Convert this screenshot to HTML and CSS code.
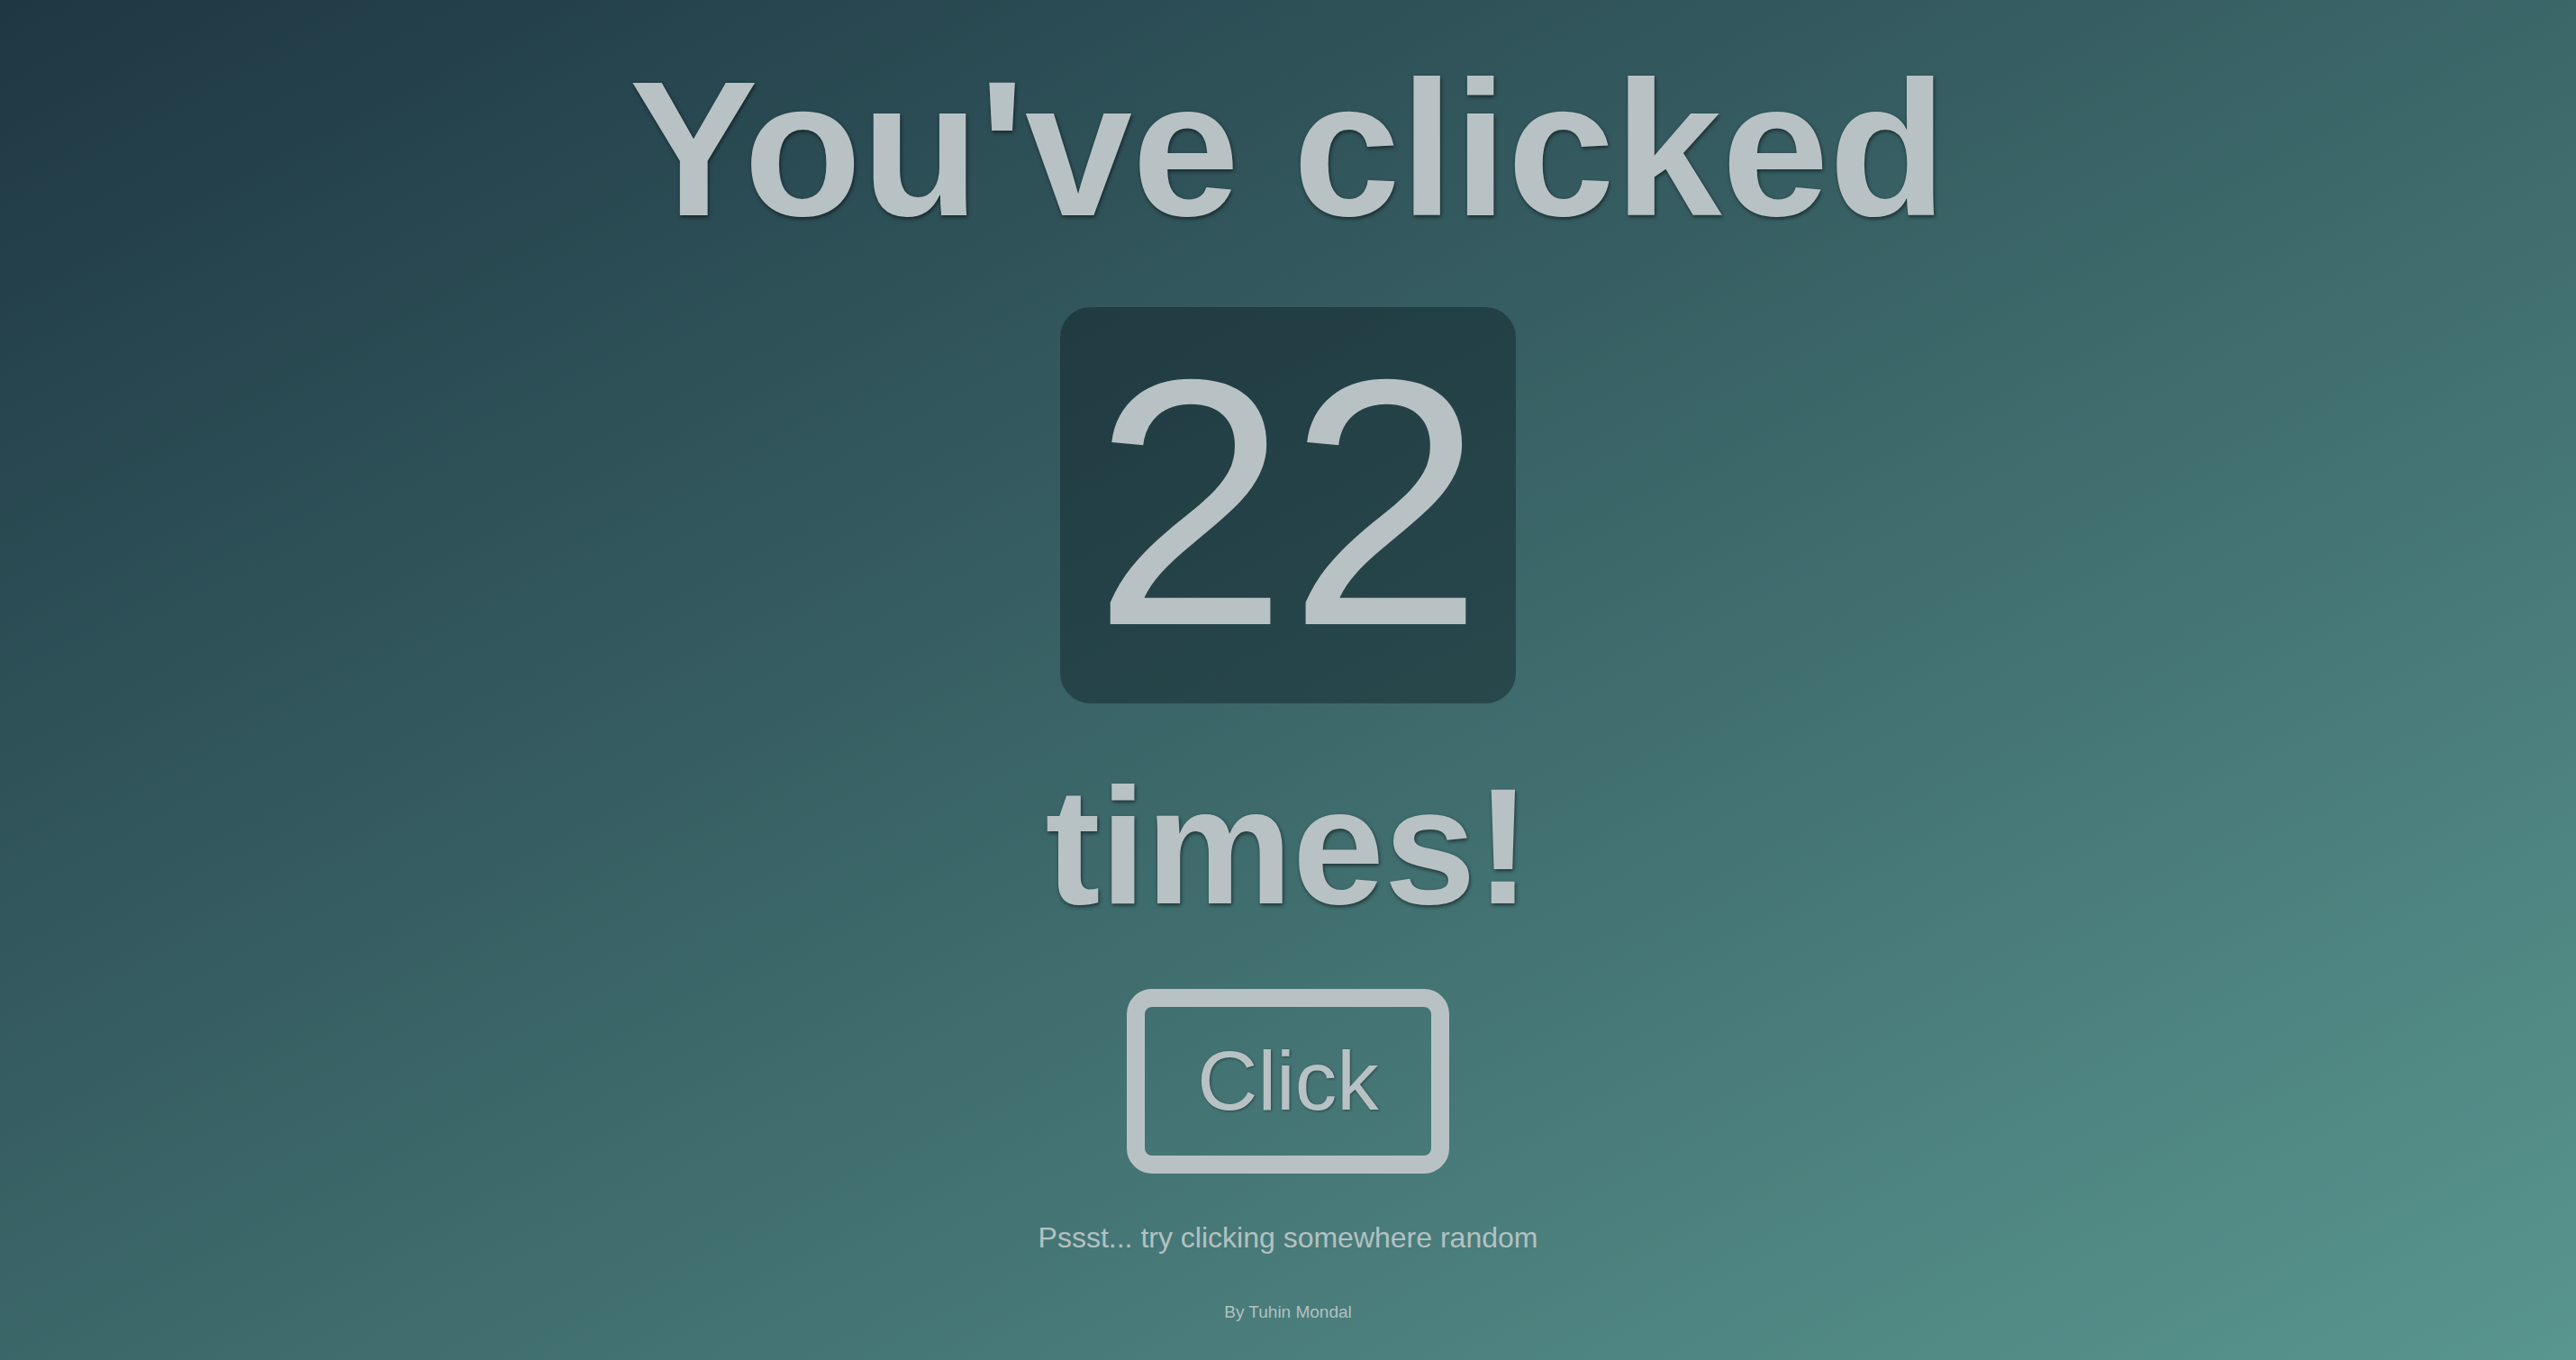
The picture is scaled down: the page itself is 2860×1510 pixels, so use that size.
FILE: index.html
```html
<!DOCTYPE html>
<html lang="en">
<head>
<meta charset="utf-8">
<title>Click counter</title>
<link rel="stylesheet" href="styles.css">
</head>
<body>
<main class="page">
  <h1 class="title">You've clicked</h1>
  <div class="counter">22</div>
  <h2 class="times">times!</h2>
  <button class="click-btn" type="button">Click</button>
  <p class="hint">Pssst... try clicking somewhere random</p>
  <p class="credit">By Tuhin Mondal</p>
</main>
</body>
</html>
```
FILE: styles.css
```css
html, body {
  margin: 0;
  padding: 0;
  height: 100%;
}

body {
  background: linear-gradient(to bottom right, #1e3743, #59968f);
  font-family: "Liberation Sans", Arial, sans-serif;
  color: #b8c2c5;
  overflow: hidden;
}

.page {
  height: 100vh;
  display: flex;
  flex-direction: column;
  align-items: center;
  justify-content: center;
  gap: 53px;
}

.title {
  margin: 0;
  font-size: 214px;
  font-weight: 700;
  line-height: normal;
  text-shadow: 1px 2px 4px rgba(0, 0, 0, 0.55);
}

.counter {
  font-size: 390px;
  line-height: 434px;
  padding: 0 36px 6px;
  border-radius: 34px;
  background: rgba(10, 25, 30, 0.42);
}

.times {
  margin: 0;
  font-size: 183px;
  font-weight: 700;
  line-height: normal;
  text-shadow: 1px 2px 4px rgba(0, 0, 0, 0.55);
}

.click-btn {
  font-family: "Liberation Sans", Arial, sans-serif;
  font-size: 93px;
  line-height: normal;
  color: #b8c2c5;
  background: transparent;
  border: 20px solid #b8c2c5;
  border-radius: 28px;
  padding: 29px 58px;
  text-shadow: 1px 1px 3px rgba(0, 0, 0, 0.4);
  cursor: pointer;
}

.hint {
  margin: 0;
  font-size: 32px;
  line-height: normal;
  color: #b3c1c2;
}

.credit {
  margin: 0;
  font-size: 19px;
  line-height: normal;
  color: #b3c1c2;
}
```
